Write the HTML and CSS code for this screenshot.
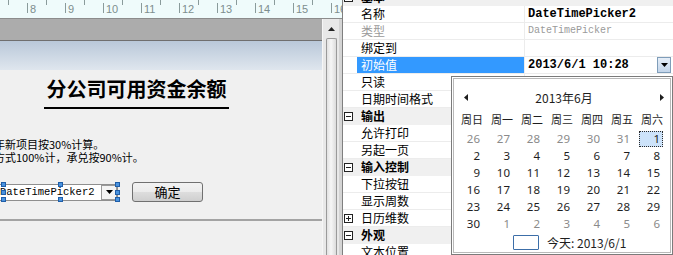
FILE: index.html
```html
<!DOCTYPE html>
<html lang="zh-CN">
  <head>
    <meta charset="UTF-8" />
    <title>报表设计器</title>
    <link rel="stylesheet" href="styles.css">
  </head>
  <body>
    <div class="app">
      <div class="designer">
        <div class="ruler">
          <span>8</span><span>9</span><span>10</span><span>11</span><span>12</span>
          <span>13</span><span>14</span><span>15</span><span>16</span>
        </div>
        <div class="workspace">
          <div class="canvas">
            <div class="toolbar"></div>
            <div class="band"></div>
            <div class="form">
              <h1 class="title">分公司可用资金余额</h1>
              <p class="note">年新项目按30%计算。</p>
              <p class="note">方式100%计，承兑按90%计。</p>
              <div class="controls">
                <div class="picker">
                  <span class="picker-text">DateTimePicker2</span>
                  <span class="picker-btn">
                    <svg width="7" height="4" viewBox="0 0 7 4"><polygon points="0,0 7,0 3.5,4" /></svg>
                  </span>
                  <i class="handle h-l1 h-t1"></i>
                  <i class="handle h-l2 h-t1"></i>
                  <i class="handle h-l3 h-t1"></i>
                  <i class="handle h-l1 h-t2"></i>
                  <i class="handle h-l3 h-t2"></i>
                  <i class="handle h-l1 h-t3"></i>
                  <i class="handle h-l2 h-t3"></i>
                  <i class="handle h-l3 h-t3"></i>
                </div>
                <button class="ok">确定</button>
              </div>
            </div>
            <div class="rest"></div>
          </div>
          <div class="vscroll">
            <div class="up">
              <svg width="7" height="4" viewBox="0 0 7 4"><polygon points="0,4 7,4 3.5,0" /></svg>
            </div>
            <div class="thumb"></div>
          </div>
          <div class="splitter"></div>
        </div>
      </div>

      <div class="props">
        <div class="row cat"><span class="tog"><i class="box minus"></i></span><span class="name">基本</span></div>
        <div class="row"><span class="tog"></span><span class="name">名称</span><span class="val strong">DateTimePicker2</span></div>
        <div class="row"><span class="tog"></span><span class="name muted">类型</span><span class="val small muted">DateTimePicker</span></div>
        <div class="row"><span class="tog"></span><span class="name">绑定到</span><span class="val"></span></div>
        <div class="row">
          <span class="tog"></span><span class="name selected">初始值</span>
          <span class="val strong">2013/6/1 10:28
            <span class="drop"><svg width="7" height="4" viewBox="0 0 7 4"><polygon points="0,0 7,0 3.5,4" /></svg></span>
          </span>
        </div>
        <div class="row"><span class="tog"></span><span class="name">只读</span><span class="val"></span></div>
        <div class="row"><span class="tog"></span><span class="name">日期时间格式</span><span class="val"></span></div>
        <div class="row cat"><span class="tog"><i class="box minus"></i></span><span class="name">输出</span></div>
        <div class="row"><span class="tog"></span><span class="name">允许打印</span><span class="val"></span></div>
        <div class="row"><span class="tog"></span><span class="name">另起一页</span><span class="val"></span></div>
        <div class="row cat"><span class="tog"><i class="box minus"></i></span><span class="name">输入控制</span></div>
        <div class="row"><span class="tog"></span><span class="name">下拉按钮</span><span class="val"></span></div>
        <div class="row"><span class="tog"></span><span class="name">显示周数</span><span class="val"></span></div>
        <div class="row"><span class="tog"><i class="box plus"></i></span><span class="name">日历维数</span><span class="val"></span></div>
        <div class="row cat"><span class="tog"><i class="box minus"></i></span><span class="name">外观</span></div>
        <div class="row"><span class="tog"></span><span class="name">文本位置</span><span class="val"></span></div>
      </div>

      <!-- dropdown calendar of the 初始值 editor -->
      <div class="calendar">
        <div class="cal-head">
          <svg class="prev" width="4" height="7" viewBox="0 0 4 7"><polygon points="4,0 0,3.5 4,7" /></svg>
          <span class="cal-title">2013年6月</span>
          <svg class="next" width="4" height="7" viewBox="0 0 4 7"><polygon points="0,0 4,3.5 0,7" /></svg>
        </div>
        <div class="cal-week">
          <span>周日</span><span>周一</span><span>周二</span><span>周三</span><span>周四</span><span>周五</span><span>周六</span>
        </div>
        <div class="cal-days">
          <span class="out"><b>26</b></span><span class="out"><b>27</b></span><span class="out"><b>28</b></span><span class="out"><b>29</b></span><span class="out"><b>30</b></span><span class="out"><b>31</b></span><span class="pick"><b>1</b></span>
          <span><b>2</b></span><span><b>3</b></span><span><b>4</b></span><span><b>5</b></span><span><b>6</b></span><span><b>7</b></span><span><b>8</b></span>
          <span><b>9</b></span><span><b>10</b></span><span><b>11</b></span><span><b>12</b></span><span><b>13</b></span><span><b>14</b></span><span><b>15</b></span>
          <span><b>16</b></span><span><b>17</b></span><span><b>18</b></span><span><b>19</b></span><span><b>20</b></span><span><b>21</b></span><span><b>22</b></span>
          <span><b>23</b></span><span><b>24</b></span><span><b>25</b></span><span><b>26</b></span><span><b>27</b></span><span><b>28</b></span><span><b>29</b></span>
          <span><b>30</b></span><span class="out"><b>1</b></span><span class="out"><b>2</b></span><span class="out"><b>3</b></span><span class="out"><b>4</b></span><span class="out"><b>5</b></span><span class="out"><b>6</b></span>
        </div>
        <div class="cal-today">
          <span class="today-box"></span>
          <span>今天: 2013/6/1</span>
        </div>
      </div>
    </div>
  </body>
</html>
```

FILE: styles.css
```css
* {
  margin: 0;
  padding: 0;
  box-sizing: border-box;
}

body {
  width: 673px;
  height: 255px;
  overflow: hidden;
  background: #f0f0f0;
  font-family: "Noto Sans CJK SC", sans-serif;
  font-size: 12px;
  color: #000;
}

.app {
  position: relative;
  display: flex;
  height: 255px;
}

/* left: report designer */
.designer {
  width: 342px;
  flex-shrink: 0;
  display: flex;
  flex-direction: column;
}

.ruler {
  height: 19px;
  flex-shrink: 0;
  display: flex;
  padding-left: 26px;
  overflow: hidden;
  border-bottom: 1px solid #8c8c8c;
  background:
    linear-gradient(to right, #8a9b9b 1px, transparent 1px) 27px 3px / 38px 10px repeat-x,
    linear-gradient(to right, #8a9b9b 1px, transparent 1px) 8px 0 / 38px 5px repeat-x,
    #effbfb;
  font: 11px/1 "Liberation Sans", sans-serif;
  color: #7d8e8e;
}

.ruler span {
  flex: 0 0 38px;
  padding: 4px 0 0 4px;
}

.workspace {
  flex: 1;
  display: flex;
  min-height: 0;
}

.canvas {
  width: 322px;
  display: flex;
  flex-direction: column;
}

.toolbar {
  height: 22px;
  background: #acacac;
  border-bottom: 1px solid #6f6f6f;
}

.band {
  height: 29px;
  background: linear-gradient(#b9c8d9, #dfe6ee);
}

.form {
  padding: 7px 0 17px;
  border-bottom: 2px solid #a3a3a3;
}

.title {
  width: 185px;
  margin-left: 44px;
  margin-bottom: 29px;
  padding-bottom: 6px;
  border-bottom: 2px solid #000;
  font-size: 20px;
  line-height: 24px;
  font-weight: 700;
  text-align: center;
}

.note {
  margin-left: -6px;
  font-size: 11px;
  line-height: 13px;
  white-space: nowrap;
}

.controls {
  display: flex;
  align-items: center;
  gap: 14px;
  height: 20px;
  margin-top: 18px;
}

.picker {
  position: relative;
  display: flex;
  align-items: center;
  justify-content: space-between;
  width: 120px;
  height: 17px;
  margin-left: -2px;
  background: #fff;
  border: 1px solid #8f8f8f;
}

.picker-text {
  padding-left: 1px;
  font: 10.5px/15px "Liberation Mono", monospace;
}

.picker-btn {
  display: flex;
  align-items: center;
  justify-content: center;
  width: 16px;
  height: 15px;
  background: #f4f4f4;
  border: 1px solid #9a9a9a;
}

.handle {
  position: absolute;
  width: 5px;
  height: 5px;
  background: #4a93df;
  border: 1px solid #1f5ea8;
}

.h-l1 { left: 2px; }
.h-l2 { left: 59px; }
.h-l3 { left: 116px; }
.h-t1 { top: -3px; }
.h-t2 { top: 5px; }
.h-t3 { top: 12px; }

.ok {
  width: 71px;
  height: 20px;
  border: 1px solid #707070;
  border-radius: 3px;
  background: linear-gradient(#f2f2f2 0%, #ebebeb 50%, #dddddd 51%, #cfcfcf 100%);
  font-family: "Noto Sans CJK SC", sans-serif;
  font-size: 13px;
  line-height: 16px;
  color: #000;
}

.rest {
  flex: 1;
}

.vscroll {
  width: 17px;
  display: flex;
  flex-direction: column;
  background: #e8e8e8;
  border-left: 1px solid #f6f6f6;
}

.up {
  height: 19px;
  display: flex;
  align-items: center;
  justify-content: center;
  fill: #222;
}

.thumb {
  flex: 1;
  margin: 0 2px 0 3px;
  border: 1px solid #9a9a9a;
  border-bottom: none;
  border-radius: 2px 2px 0 0;
  background: linear-gradient(to right, #e2e2e2, #f6f6f6 45%, #dcdcdc);
}

.splitter {
  width: 3px;
  background: #d4d4d4;
}

/* right: property grid */
.props {
  flex: 1;
  background: #fff;
  border-left: 1px solid #7f7f7f;
  overflow: hidden;
}

.props .row:first-child {
  margin-top: -11px;
}

.row {
  display: grid;
  grid-template-columns: 14px 167px 1fr;
  height: 17px;
  border-bottom: 1px solid #ececec;
  line-height: 16px;
}

.tog {
  display: flex;
  align-items: center;
  padding-left: 1px;
}

.box {
  display: block;
  width: 9px;
  height: 9px;
  border: 1px solid #222;
}

.box.minus {
  background: linear-gradient(#222, #222) center / 5px 1px no-repeat, #fff;
}

.box.plus {
  background:
    linear-gradient(#222, #222) center / 5px 1px no-repeat,
    linear-gradient(#222, #222) center / 1px 5px no-repeat,
    #fff;
}

.name {
  padding-left: 4px;
  white-space: nowrap;
}

.name.selected {
  background: #3399ff;
  color: #fff;
}

.muted {
  color: #9a9a9a;
}

.val {
  display: flex;
  align-items: center;
  justify-content: space-between;
  padding-left: 3px;
  border-left: 1px solid #ececec;
  white-space: nowrap;
}

.val.strong {
  font: 700 12px/16px "Liberation Mono", monospace;
}

.val.small {
  font: 10px/16px "Liberation Mono", monospace;
}

.drop {
  display: flex;
  align-items: center;
  justify-content: center;
  width: 14px;
  height: 16px;
  margin-right: 2px;
  border: 1px solid #7f9db9;
  background: linear-gradient(#e6eef8, #c3d5ea);
}

.cat {
  background: #f0f0f0;
  border-bottom-color: #f0f0f0;
}

.cat .name {
  font-weight: 700;
}

/* dropdown calendar */
.calendar {
  position: absolute;
  left: 451px;
  top: 76px;
  width: 222px;
  height: 179px;
  padding-top: 11px;
  background: #fff;
  border: 1px solid #7b7b7b;
  box-shadow: inset 0 0 0 1px #fff, inset 0 0 0 2px #b9b9b9;
  color: #1e1e1e;
}

.cal-head {
  display: grid;
  grid-template-columns: 1fr auto 1fr;
  align-items: center;
  height: 18px;
  padding: 0 8px 0 12px;
}

.cal-head svg {
  fill: #1e1e1e;
}

.cal-head .next {
  justify-self: end;
}

.cal-title {
  font-size: 12px;
}

.cal-week {
  display: grid;
  grid-template-columns: repeat(7, 30px);
  height: 17px;
  margin-top: 5px;
  padding-left: 5px;
  font-size: 11px;
  line-height: 17px;
  text-align: center;
}

.cal-days {
  display: grid;
  grid-template-columns: repeat(7, 30px);
  grid-auto-rows: 17px;
  margin-top: 3px;
  padding-left: 5px;
  font: 11.5px/16px "Noto Sans", sans-serif;
}

.cal-days b {
  display: block;
  width: 24px;
  height: 16px;
  margin-left: 2px;
  padding-right: 3px;
  font-weight: 400;
  text-align: right;
}

.cal-days .out {
  color: #8a8a8a;
}

.cal-days .pick b {
  background: #cde3fa;
  border: 1px dotted #2b2b2b;
  padding-right: 2px;
  line-height: 14px;
}

.cal-today {
  display: flex;
  align-items: center;
  gap: 8px;
  height: 18px;
  padding-left: 61px;
  font-size: 12px;
}

.today-box {
  width: 26px;
  height: 15px;
  border: 1px solid #3c6ea8;
  border-radius: 1px;
}
```
